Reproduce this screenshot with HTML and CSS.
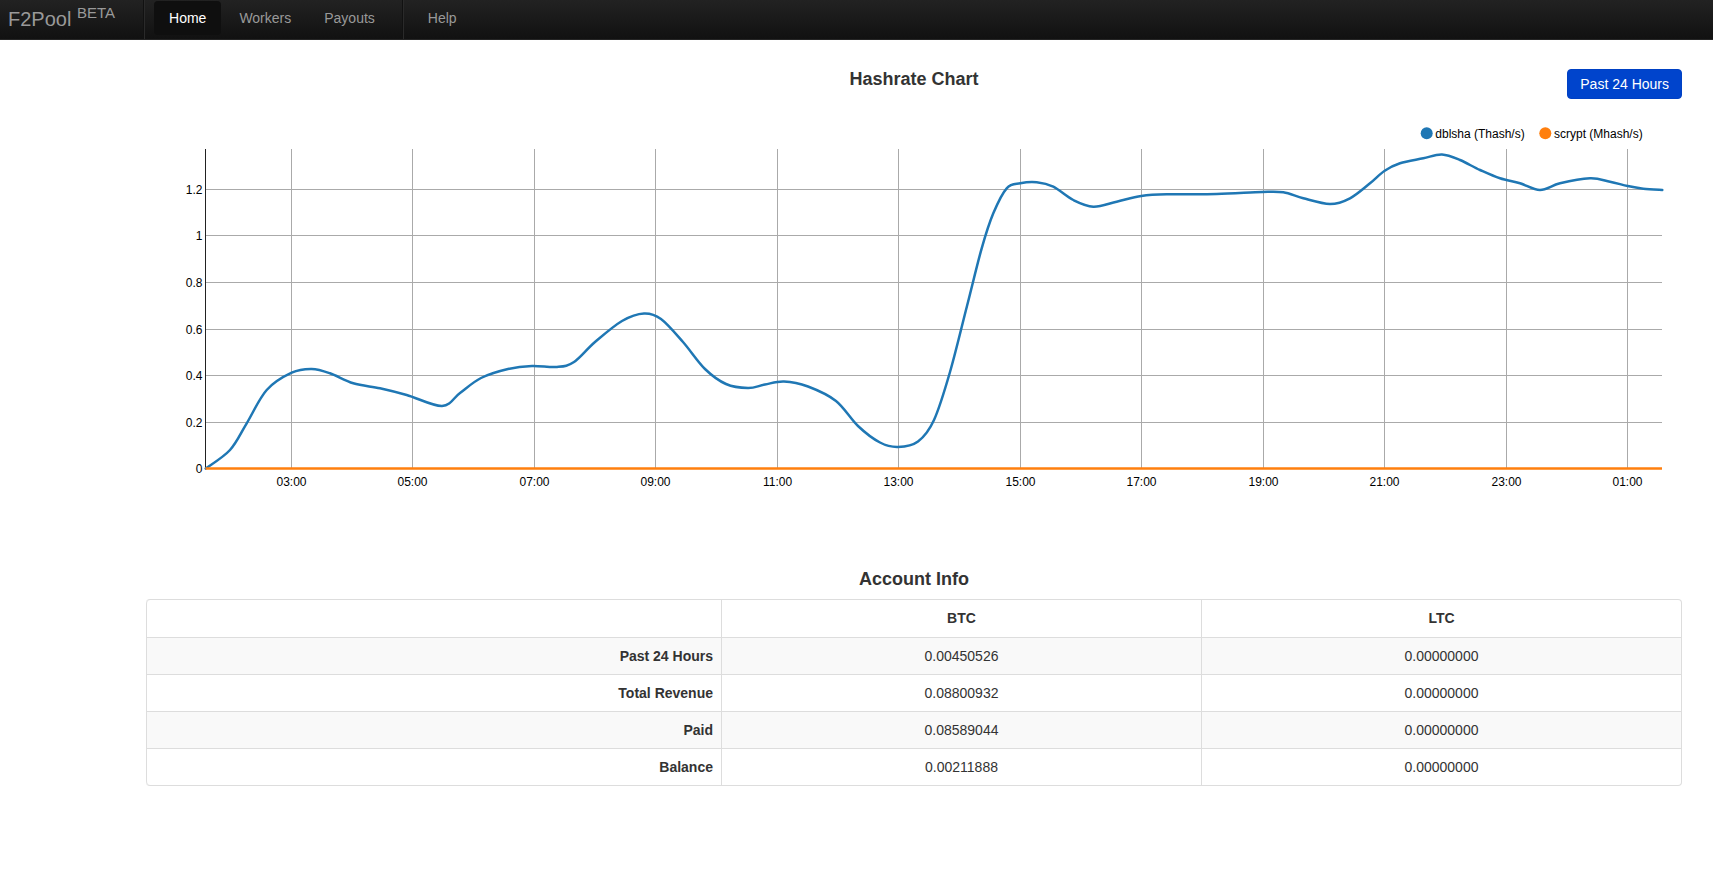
FILE: index.html
```html
<!DOCTYPE html>
<html lang="en">
<head>
<meta charset="utf-8">
<title>F2Pool</title>
<link rel="stylesheet" href="styles.css">
</head>
<body>
<header class="navbar">
  <a class="brand" href="#">F2Pool <sup>BETA</sup></a>
  <span class="divider"></span>
  <nav class="nav">
    <a class="nav-link active" href="#">Home</a>
    <a class="nav-link" href="#">Workers</a>
    <a class="nav-link" href="#">Payouts</a>
  </nav>
  <span class="divider"></span>
  <nav class="nav">
    <a class="nav-link" href="#">Help</a>
  </nav>
</header>

<main class="content">
  <section class="chart-section">
    <div class="chart-head">
      <h2 class="section-title">Hashrate Chart</h2>
      <button class="btn-range" type="button">Past 24 Hours</button>
    </div>

    <svg class="chart" width="1536" height="390" viewBox="0 0 1536 390">
      <g class="legend">
        <circle cx="1280.7" cy="23.3" r="6" fill="#1f77b4"/>
        <text x="1289.3" y="27.5">dblsha (Thash/s)</text>
        <circle cx="1399.3" cy="23.3" r="6" fill="#ff7f0e"/>
        <text x="1408" y="27.5">scrypt (Mhash/s)</text>
      </g>

      <g class="grid">
        <line x1="59.5" y1="312.5" x2="1516" y2="312.5"/>
        <line x1="59.5" y1="265.5" x2="1516" y2="265.5"/>
        <line x1="59.5" y1="219.5" x2="1516" y2="219.5"/>
        <line x1="59.5" y1="172.5" x2="1516" y2="172.5"/>
        <line x1="59.5" y1="125.5" x2="1516" y2="125.5"/>
        <line x1="59.5" y1="79.5" x2="1516" y2="79.5"/>

        <line x1="145.5" y1="39" x2="145.5" y2="358.5"/>
        <line x1="266.5" y1="39" x2="266.5" y2="358.5"/>
        <line x1="388.5" y1="39" x2="388.5" y2="358.5"/>
        <line x1="509.5" y1="39" x2="509.5" y2="358.5"/>
        <line x1="631.5" y1="39" x2="631.5" y2="358.5"/>
        <line x1="752.5" y1="39" x2="752.5" y2="358.5"/>
        <line x1="874.5" y1="39" x2="874.5" y2="358.5"/>
        <line x1="995.5" y1="39" x2="995.5" y2="358.5"/>
        <line x1="1117.5" y1="39" x2="1117.5" y2="358.5"/>
        <line x1="1238.5" y1="39" x2="1238.5" y2="358.5"/>
        <line x1="1360.5" y1="39" x2="1360.5" y2="358.5"/>
        <line x1="1481.5" y1="39" x2="1481.5" y2="358.5"/>
      </g>

      <g class="y-labels">
        <text x="56.5" y="362.5">0</text>
        <text x="56.5" y="316.5">0.2</text>
        <text x="56.5" y="269.5">0.4</text>
        <text x="56.5" y="223.5">0.6</text>
        <text x="56.5" y="176.5">0.8</text>
        <text x="56.5" y="129.5">1</text>
        <text x="56.5" y="83.5">1.2</text>
      </g>

      <g class="x-labels">
        <text x="145.5" y="375.5">03:00</text>
        <text x="266.5" y="375.5">05:00</text>
        <text x="388.5" y="375.5">07:00</text>
        <text x="509.5" y="375.5">09:00</text>
        <text x="631.5" y="375.5">11:00</text>
        <text x="752.5" y="375.5">13:00</text>
        <text x="874.5" y="375.5">15:00</text>
        <text x="995.5" y="375.5">17:00</text>
        <text x="1117.5" y="375.5">19:00</text>
        <text x="1238.5" y="375.5">21:00</text>
        <text x="1360.5" y="375.5">23:00</text>
        <text x="1481.5" y="375.5">01:00</text>
      </g>

      <line class="axis" x1="59.5" y1="39" x2="59.5" y2="359.5"/>
      <path id="hashrate-line" class="series-dblsha" d="M59.7,358.5"/>
      <line class="series-scrypt" x1="59.5" y1="358.5" x2="1516" y2="358.5"/>
    </svg>
  </section>

  <section class="account">
    <h2 class="section-title">Account Info</h2>
    <table class="info-table">
      <colgroup>
        <col class="col-label">
        <col>
        <col>
      </colgroup>
      <thead>
        <tr>
          <th></th>
          <th>BTC</th>
          <th>LTC</th>
        </tr>
      </thead>
      <tbody>
        <tr>
          <th class="row-label">Past 24 Hours</th>
          <td>0.00450526</td>
          <td>0.00000000</td>
        </tr>
        <tr>
          <th class="row-label">Total Revenue</th>
          <td>0.08800932</td>
          <td>0.00000000</td>
        </tr>
        <tr>
          <th class="row-label">Paid</th>
          <td>0.08589044</td>
          <td>0.00000000</td>
        </tr>
        <tr>
          <th class="row-label">Balance</th>
          <td>0.00211888</td>
          <td>0.00000000</td>
        </tr>
      </tbody>
    </table>
  </section>
</main>
<script src="script.js"></script>
</body>
</html>
```

FILE: styles.css
```css
* {
  box-sizing: border-box;
}

html, body {
  margin: 0;
  padding: 0;
  background: #fff;
}

body {
  font-family: "Liberation Sans", Arial, sans-serif;
  font-size: 14px;
  line-height: 20px;
  color: #333;
}

/* ---------- navbar ---------- */
.navbar {
  display: flex;
  align-items: stretch;
  height: 40px;
  background: linear-gradient(#222222, #111111);
  border-bottom: 1px solid #252525;
}

.brand {
  display: block;
  padding: 0 19px 0 8px;
  font-size: 20px;
  line-height: 38px;
  color: #999;
  text-decoration: none;
  white-space: nowrap;
}

.brand sup {
  font-size: 15px;
  line-height: 0;
  vertical-align: 8px;
}

.divider {
  width: 2px;
  height: 39px;
  margin: 0 9px;
  border-left: 1px solid #111;
  border-right: 1px solid #2a2a2a;
}

.nav {
  display: flex;
  align-items: flex-start;
}

.nav-link {
  display: block;
  height: 34px;
  margin-top: 1px;
  margin-right: 3px;
  padding: 0 15px;
  line-height: 34px;
  font-size: 14px;
  color: #999;
  text-decoration: none;
  border-radius: 4px;
}

.nav-link.active {
  background: #0f0f0f;
  color: #fff;
}

/* ---------- content ---------- */
.content {
  padding: 0 31px 0 146px;
}

.section-title {
  margin: 0;
  font-size: 18px;
  line-height: 20px;
  font-weight: bold;
  color: #333;
  text-align: center;
}

.chart-head {
  display: grid;
  grid-template-columns: 1fr auto 1fr;
  align-items: start;
  margin-top: 29px;
}

.chart-head .section-title {
  grid-column: 2;
}

.btn-range {
  grid-column: 3;
  justify-self: end;
  height: 30px;
  padding: 4px 12px;
  border: 1px solid #0041c4;
  border-radius: 4px;
  background: #0044cc;
  color: #fff;
  font-family: "Liberation Sans", Arial, sans-serif;
  font-size: 14px;
  line-height: 20px;
  cursor: pointer;
}

.chart {
  display: block;
  margin-top: 11px;
  font-family: "Liberation Sans", Arial, sans-serif;
  font-size: 12px;
}

.chart text {
  fill: #000;
}

.grid line {
  stroke: #aaa;
  stroke-width: 1;
}

.y-labels text {
  text-anchor: end;
}

.x-labels text {
  text-anchor: middle;
}

.axis {
  stroke: #222;
  stroke-width: 1;
}

.series-dblsha {
  fill: none;
  stroke: #1f77b4;
  stroke-width: 2.5;
  stroke-linejoin: round;
  stroke-linecap: round;
}

.series-scrypt {
  stroke: #ff7f0e;
  stroke-width: 2.5;
}

/* ---------- account table ---------- */
.account {
  margin-top: 69px;
}

.account .section-title {
  margin-bottom: 10px;
}

.info-table {
  width: 100%;
  table-layout: fixed;
  border-collapse: separate;
  border-spacing: 0;
  border: 1px solid #ddd;
  border-left: 0;
  border-radius: 4px;
}

.col-label {
  width: 575px;
}

.info-table th,
.info-table td {
  padding: 8px;
  line-height: 20px;
  font-size: 14px;
  text-align: center;
  border-left: 1px solid #ddd;
  border-top: 1px solid #ddd;
}

.info-table thead th {
  border-top: 0;
  padding-top: 8px;
  padding-bottom: 9px;
  font-weight: bold;
}

.info-table thead th:first-child {
  border-top-left-radius: 4px;
}

.info-table thead th:last-child {
  border-top-right-radius: 4px;
}

.info-table tbody tr:last-child > :first-child {
  border-bottom-left-radius: 4px;
}

.info-table tbody tr:last-child > :last-child {
  border-bottom-right-radius: 4px;
}

.info-table .row-label {
  text-align: right;
  font-weight: bold;
}

.info-table tbody tr:nth-child(odd) > th,
.info-table tbody tr:nth-child(odd) > td {
  background: #f9f9f9;
}
```

FILE: script.js
```js
(function () {
  var pts = [
    [59.7, 358.5], [84, 340], [100.7, 313.3], [120.7, 280], [145.7, 262.7],
    [165.7, 259], [184, 263.3], [207.3, 273.3], [234, 278.3], [260.7, 285],
    [296, 296], [314, 283], [335, 268], [362, 259], [386, 256], [411, 257],
    [428, 252], [449, 232], [476, 211], [498, 203.5], [515, 209], [537, 232],
    [559, 259], [580, 274], [602, 278], [619, 274.5], [638, 271.5],
    [662, 276.5], [690, 291], [712, 316], [734, 332.5], [752, 337],
    [772, 331.5], [788, 310], [804, 262], [821, 196], [835.7, 138.3],
    [847.3, 103.3], [860.7, 78.3], [874.3, 73.3], [890.7, 72.3], [907.3, 76.7],
    [927.3, 90], [947.3, 96.7], [970.7, 91.7], [995.3, 86], [1020.7, 84.3],
    [1070.7, 84], [1116.3, 82], [1137.3, 82.3], [1157.3, 88.3], [1184, 94],
    [1204, 88.3], [1224, 73.3], [1238.7, 60.7], [1254, 53.3], [1277.3, 48.3],
    [1296, 44.5], [1314, 50], [1334, 60], [1354, 68.3], [1374, 73.3],
    [1394, 80], [1414, 73.3], [1444, 68.3], [1464, 71.7], [1481.7, 76],
    [1497.3, 78.7], [1516.3, 80]
  ];

  function f(v) { return v.toFixed(1); }

  var d = 'M' + f(pts[0][0]) + ',' + f(pts[0][1]);
  for (var i = 0; i < pts.length - 1; i++) {
    var p0 = pts[i - 1] || pts[i];
    var p1 = pts[i];
    var p2 = pts[i + 1];
    var p3 = pts[i + 2] || p2;
    var c1x = p1[0] + (p2[0] - p0[0]) / 6;
    var c1y = p1[1] + (p2[1] - p0[1]) / 6;
    var c2x = p2[0] - (p3[0] - p1[0]) / 6;
    var c2y = p2[1] - (p3[1] - p1[1]) / 6;
    d += 'C' + [c1x, c1y, c2x, c2y, p2[0], p2[1]].map(f).join(',');
  }
  document.getElementById('hashrate-line').setAttribute('d', d);
})();
```
